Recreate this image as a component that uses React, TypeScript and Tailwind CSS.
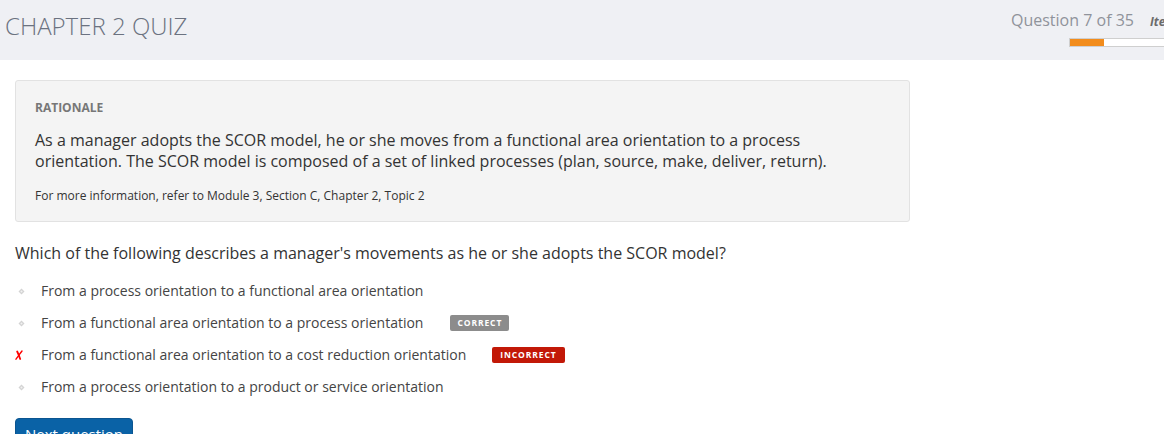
import React from "react";

const font = { fontFamily: '"Open Sans", "Noto Sans", Arial, sans-serif' };

function Bullet() {
  return (
    <svg width="7" height="7" viewBox="0 0 7 7" className="shrink-0">
      <path d="M3.5 0.5 L6.5 3.5 L3.5 6.5 L0.5 3.5 Z" fill="#d3d3d3" />
      <circle cx="3.5" cy="3.5" r="1" fill="#f2f2f2" />
    </svg>
  );
}

function Cross() {
  return (
    <svg width="8" height="10" viewBox="0 0 8 10" className="shrink-0">
      <path d="M2.2 1.5 C3.2 3.5 4.2 6 5.2 9" stroke="#f00" strokeWidth="1.8" fill="none" strokeLinecap="round" />
      <path d="M7 1 C5 3.5 3 6.5 1 9.2" stroke="#f00" strokeWidth="1.4" fill="none" strokeLinecap="round" />
    </svg>
  );
}

const options: { text: string; mark?: "x"; badge?: "correct" | "incorrect" }[] = [
  { text: "From a process orientation to a functional area orientation" },
  { text: "From a functional area orientation to a process orientation", badge: "correct" },
  { text: "From a functional area orientation to a cost reduction orientation", mark: "x", badge: "incorrect" },
  { text: "From a process orientation to a product or service orientation" },
];

export default function App() {
  return (
    <div className="w-[1164px] h-[434px] overflow-hidden bg-white" style={font}>
      <header className="h-[60px] bg-[#eff0f4] flex">
        <div className="w-[1011px] shrink-0 pl-[5px] pt-[9px]">
          <h1 className="text-[24px] leading-[33px] font-light text-[#6b7280]">CHAPTER 2 QUIZ</h1>
        </div>
        <div className="flex flex-col shrink-0 pt-[9px]">
          <div className="flex items-baseline gap-[16px] whitespace-nowrap">
            <span className="text-[16px] leading-[22px] text-[#8f939b]">Question 7 of 35</span>
            <span className="text-[12px] font-bold italic text-[#6b6b6b]">Item ID</span>
          </div>
          <div className="pl-[58px] mt-[7px]">
            <div className="w-[150px] h-[9px] border border-[#cfcfcf] bg-white flex">
              <div className="w-[34px] h-full bg-[#f28c1c]" />
            </div>
          </div>
        </div>
      </header>

      <main className="px-[15px]">
        <section className="mt-[20px] w-[895px] h-[142px] bg-[#f4f4f4] border border-[#e2e2e2] rounded-[3px] px-[19px] pt-[18px]">
          <div className="text-[12px] leading-[17px] font-bold text-[#777777]">RATIONALE</div>
          <p className="mt-[14px] text-[16px] leading-[21px] text-[#333333] pr-[40px]">
            As a manager adopts the SCOR model, he or she moves from a functional area orientation to a process
            orientation. The SCOR model is composed of a set of linked processes (plan, source, make, deliver, return).
          </p>
          <p className="mt-[15px] text-[12px] leading-[17px] text-[#333333]">
            For more information, refer to Module 3, Section C, Chapter 2, Topic 2
          </p>
        </section>

        <p className="mt-[20px] text-[16px] leading-[22px] text-[#333333]">
          Which of the following describes a manager's movements as he or she adopts the SCOR model?
        </p>

        <ul className="mt-[11px]">
          {options.map((o, i) => (
            <li key={i} className="h-[32px] flex items-center">
              <div className="w-[26px] shrink-0 flex items-center">
                {o.mark === "x" ? (
                  <span className="pl-[0px]"><Cross /></span>
                ) : (
                  <span className="pl-[3px]"><Bullet /></span>
                )}
              </div>
              <span className="text-[14px] leading-[20px] text-[#444444]">{o.text}</span>
              {o.badge === "correct" && (
                <span className="ml-[27px] h-[16px] px-[7px] rounded-[2px] bg-[#8c8c8c] text-white text-[8.5px] font-bold tracking-[0.9px] flex items-center">
                  CORRECT
                </span>
              )}
              {o.badge === "incorrect" && (
                <span className="ml-[26px] h-[16px] px-[8px] rounded-[2px] bg-[#c21807] text-white text-[8.5px] font-bold tracking-[0.9px] flex items-center">
                  INCORRECT
                </span>
              )}
            </li>
          ))}
        </ul>

        <button className="mt-[15px] w-[118px] h-[34px] rounded-[4px] bg-[#0a62a6] border border-[#0b5590] text-white text-[15px] leading-[20px] pt-[5px] flex justify-center items-start">
          Next question
        </button>
      </main>
    </div>
  );
}
